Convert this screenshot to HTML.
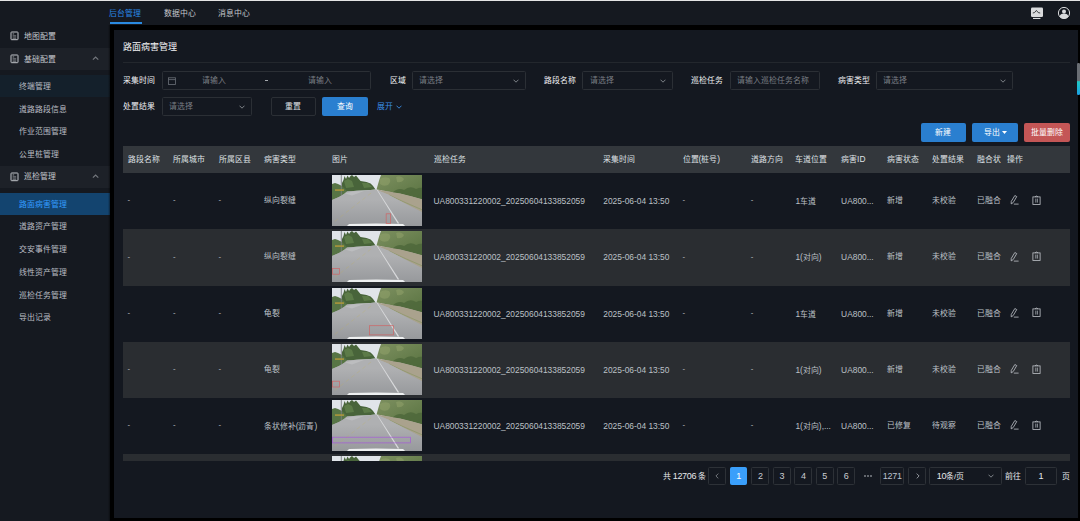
<!DOCTYPE html><html lang="zh-CN"><head><meta charset="utf-8"><style>
*{box-sizing:border-box;margin:0;padding:0}
html,body{width:1080px;height:521px;overflow:hidden;background:#000;font-family:"Liberation Sans",sans-serif;color:#cfd3da;font-size:7.875px}
.a{position:absolute;white-space:nowrap}
.tab{height:10px;line-height:10px;color:#c4c7cc}
.sm{left:18.8px;height:22.5px;line-height:22.5px;color:#b9bdc3}
.lbl{height:18px;line-height:18px;color:#f0f1f3;font-weight:500;transform:translateY(1.3px)}
.inp{height:18.5px;border:1px solid #2b2f35;border-radius:1.5px}
.ph{color:#7a7e84;transform:translateY(0.8px)}
.btn{height:18.5px;line-height:20.5px;text-align:center;color:#fff;border-radius:2px}
.th{height:27px;line-height:27px;color:#dfe1e4}
.td{line-height:10px;color:#bcc0c6}
.pg{height:17.5px;border:1px solid #2d3137;border-radius:1.5px;text-align:center;color:#c9ccd1;line-height:16.5px}
</style></head><body>
<svg width="0" height="0" style="position:absolute"><defs><linearGradient id="rg" x1="0" y1="0" x2="0" y2="1"><stop offset="0.28" stop-color="#afb0b2"/><stop offset="1" stop-color="#97999c"/></linearGradient><linearGradient id="tg" x1="0" y1="0" x2="1" y2="1"><stop offset="0" stop-color="#7d9060"/><stop offset="1" stop-color="#587240"/></linearGradient></defs></svg>
<div class="a" style="left:0;top:0;width:1080px;height:1px;background:#e4e4e4"></div>
<div class="a" style="left:0;top:1px;width:1080px;height:24px;background:#151920"></div>
<div class="a" style="left:0;top:25px;width:110px;height:496px;background:#151920"></div>
<div class="a" style="left:114px;top:29.5px;width:963.5px;height:488.5px;background:#141820"></div>
<div class="a tab" style="left:109.2px;top:8.7px;color:#2a8ae8">后台管理</div>
<div class="a" style="left:109.5px;top:22px;width:32px;height:2px;background:#2a8ae0"></div>
<div class="a tab" style="left:164px;top:8.7px">数据中心</div>
<div class="a tab" style="left:218px;top:8.7px">消息中心</div>
<svg class="a" style="left:1030px;top:6px" width="14" height="14" viewBox="0 0 14 14">
<rect x="1" y="1.5" width="12" height="9.5" rx="1.3" fill="#d9dadc"/>
<path d="M2.8 7 L4.5 6.6 L6.4 4.4 L8.2 6.6 L10.2 7" stroke="#3a3c40" stroke-width="1" fill="none"/>
<rect x="3" y="11.9" width="7.4" height="1.1" fill="#d9dadc"/></svg>
<svg class="a" style="left:1057px;top:6px" width="14" height="14" viewBox="0 0 14 14">
<circle cx="7" cy="7" r="5.6" stroke="#d9dadc" stroke-width="1" fill="none"/>
<circle cx="7" cy="5.4" r="2" fill="#d9dadc"/>
<path d="M2.6 10.8 Q3.2 7.6 7 7.6 Q10.8 7.6 11.4 10.8 Q9.6 12.8 7 12.8 Q4.4 12.8 2.6 10.8Z" fill="#d9dadc"/></svg>
<svg class="a" style="left:10.4px;top:31.1px" width="9" height="10" viewBox="0 0 9 10">
<rect x="1" y="1" width="7" height="7.7" rx="0.6" stroke="#c2c5ca" stroke-width="1" fill="none"/>
<path d="M2.6 2.95h1.6M2.6 4.95h3.6M2.6 7.1h3.6" stroke="#b5b8bd" stroke-width="0.8"/></svg>
<div class="a" style="left:24px;top:26.3px;height:22.5px;line-height:22.5px;color:#c4c7cc">地图配置</div>
<div class="a" style="left:0;top:47.5px;width:110px;height:22.2px;background:#1d2128"></div>
<svg class="a" style="left:10.4px;top:54.3px" width="9" height="10" viewBox="0 0 9 10">
<rect x="1" y="1" width="7" height="7.7" rx="0.6" stroke="#c2c5ca" stroke-width="1" fill="none"/>
<path d="M2.6 2.95h1.6M2.6 4.95h3.6M2.6 7.1h3.6" stroke="#b5b8bd" stroke-width="0.8"/></svg>
<div class="a" style="left:24px;top:49.3px;height:22.2px;line-height:22.2px;color:#c4c7cc">基础配置</div>
<svg class="a" style="left:91.5px;top:56.2px" width="7" height="4.5" viewBox="0 0 7 4.5"><path d="M0.9 3.6 L3.6 1 L6.3 3.6" stroke="#73777d" stroke-width="1.2" fill="none"/></svg>
<div class="a" style="left:0;top:74.8px;width:110px;height:22.5px;background:#14202b"></div>
<div class="a sm" style="top:75.9px">终端管理</div>
<div class="a sm" style="top:98.5px">道路路段信息</div>
<div class="a sm" style="top:121.10000000000001px">作业范围管理</div>
<div class="a sm" style="top:143.70000000000002px">公里桩管理</div>
<div class="a" style="left:0;top:165.5px;width:110px;height:22.5px;background:#1d2128"></div>
<svg class="a" style="left:10.4px;top:171.6px" width="9" height="10" viewBox="0 0 9 10">
<rect x="1" y="1" width="7" height="7.7" rx="0.6" stroke="#c2c5ca" stroke-width="1" fill="none"/>
<path d="M2.6 2.95h1.6M2.6 4.95h3.6M2.6 7.1h3.6" stroke="#b5b8bd" stroke-width="0.8"/></svg>
<div class="a" style="left:24px;top:166px;height:22.5px;line-height:22.5px;color:#c4c7cc">巡检管理</div>
<svg class="a" style="left:91.5px;top:174.4px" width="7" height="4.5" viewBox="0 0 7 4.5"><path d="M0.9 3.6 L3.6 1 L6.3 3.6" stroke="#73777d" stroke-width="1.2" fill="none"/></svg>
<div class="a" style="left:0;top:192.5px;width:109.5px;height:22.3px;background:#13446f"></div>
<div class="a sm" style="top:193.5px;color:#339dff">路面病害管理</div>
<div class="a sm" style="top:216.4px">道路资产管理</div>
<div class="a sm" style="top:239.15px">交安事件管理</div>
<div class="a sm" style="top:261.9px">线性资产管理</div>
<div class="a sm" style="top:284.65px">巡检任务管理</div>
<div class="a sm" style="top:307.4px">导出记录</div>
<div class="a" style="left:107.5px;top:25px;width:2.5px;height:496px;background:linear-gradient(90deg,rgba(0,0,0,0),rgba(0,0,0,0.45))"></div>
<div class="a" style="left:123px;top:41.5px;height:11px;line-height:11px;font-size:9px;color:#f2f3f5;font-weight:500">路面病害管理</div>
<div class="a" style="left:123px;top:62px;width:947px;height:1px;background:#23272d"></div>
<div class="a lbl" style="left:123px;top:71.1px;height:18.5px;line-height:18.5px">采集时间</div>
<div class="a inp" style="left:162.2px;top:71.1px;width:209px"></div>
<svg class="a" style="left:167.5px;top:76.6px" width="8" height="8" viewBox="0 0 8 8"><rect x="0.5" y="0.8" width="7" height="6.7" stroke="#6c7178" stroke-width="0.8" fill="none"/><path d="M0.5 2.6h7" stroke="#6c7178" stroke-width="0.8"/></svg>
<div class="a ph" style="left:202.4px;top:71.1px;height:18.5px;line-height:18.5px">请输入</div>
<div class="a" style="left:264.8px;top:80.1px;width:3.6px;height:0.9px;background:#a4a8ad"></div>
<div class="a ph" style="left:307.8px;top:71.1px;height:18.5px;line-height:18.5px">请输入</div>
<div class="a lbl" style="left:390px;top:71.1px;height:18.5px;line-height:18.5px">区域</div>
<div class="a inp" style="left:412.3px;top:71.1px;width:113.6px"></div>
<div class="a ph" style="left:418.5px;top:71.1px;height:18.5px;line-height:18.5px">请选择</div>
<svg class="a" style="left:513px;top:78.6px" width="6" height="4" viewBox="0 0 6 4"><path d="M0.5 0.7 L3 3.2 L5.5 0.7" stroke="#8a8e94" stroke-width="0.9" fill="none"/></svg>
<div class="a lbl" style="left:543.7px;top:71.1px;height:18.5px;line-height:18.5px">路段名称</div>
<div class="a inp" style="left:582.2px;top:71.1px;width:90.8px"></div>
<div class="a ph" style="left:589.6px;top:71.1px;height:18.5px;line-height:18.5px">请选择</div>
<svg class="a" style="left:659.8px;top:78.6px" width="6" height="4" viewBox="0 0 6 4"><path d="M0.5 0.7 L3 3.2 L5.5 0.7" stroke="#8a8e94" stroke-width="0.9" fill="none"/></svg>
<div class="a lbl" style="left:691px;top:71.1px;height:18.5px;line-height:18.5px">巡检任务</div>
<div class="a inp" style="left:730px;top:71.1px;width:90px"></div>
<div class="a ph" style="left:737px;top:71.1px;height:18.5px;line-height:18.5px">请输入巡检任务名称</div>
<div class="a lbl" style="left:838px;top:71.1px;height:18.5px;line-height:18.5px">病害类型</div>
<div class="a inp" style="left:876.3px;top:71.1px;width:136.6px"></div>
<div class="a ph" style="left:882.8px;top:71.1px;height:18.5px;line-height:18.5px">请选择</div>
<svg class="a" style="left:999.6px;top:78.6px" width="6" height="4" viewBox="0 0 6 4"><path d="M0.5 0.7 L3 3.2 L5.5 0.7" stroke="#8a8e94" stroke-width="0.9" fill="none"/></svg>
<div class="a lbl" style="left:123px;top:97.2px;height:18.5px;line-height:18.5px">处置结果</div>
<div class="a inp" style="left:162.2px;top:97.2px;width:89.8px"></div>
<div class="a ph" style="left:168.7px;top:97.2px;height:18.5px;line-height:18.5px">请选择</div>
<svg class="a" style="left:238.5px;top:104.7px" width="6" height="4" viewBox="0 0 6 4"><path d="M0.5 0.7 L3 3.2 L5.5 0.7" stroke="#8a8e94" stroke-width="0.9" fill="none"/></svg>
<div class="a btn" style="left:270.7px;top:97.2px;width:45px;border:1px solid #2b2f35;color:#dfe1e4;line-height:18.5px">重置</div>
<div class="a btn" style="left:322.3px;top:97.2px;width:45.7px;background:#2a7fd0">查询</div>
<div class="a" style="left:376.7px;top:98.2px;height:18.5px;line-height:18.5px;color:#3a8ee6">展开</div>
<svg class="a" style="left:396px;top:105.0px" width="6" height="4" viewBox="0 0 6 4"><path d="M0.5 0.7 L3 3.2 L5.5 0.7" stroke="#3a8ee6" stroke-width="0.9" fill="none"/></svg>
<div class="a btn" style="left:920.5px;top:123.3px;width:45px;background:#2a7fd0">新建</div>
<div class="a btn" style="left:972.2px;top:123.3px;width:45.6px;background:#2a7fd0;padding-right:6px">导出</div>
<svg class="a" style="left:1002px;top:131px" width="5" height="3" viewBox="0 0 5 3"><path d="M0 0H5L2.5 3Z" fill="#fff"/></svg>
<div class="a btn" style="left:1024.2px;top:123.3px;width:45.8px;background:#c45656">批量删除</div>
<div class="a" style="left:123px;top:146px;width:947px;height:27px;background:#33373c"></div>
<div class="a th" style="left:127.6px;top:146px">路段名称</div>
<div class="a th" style="left:173px;top:146px">所属城市</div>
<div class="a th" style="left:218.5px;top:146px">所属区县</div>
<div class="a th" style="left:263.7px;top:146px">病害类型</div>
<div class="a th" style="left:332px;top:146px">图片</div>
<div class="a th" style="left:433.5px;top:146px">巡检任务</div>
<div class="a th" style="left:603.3px;top:146px">采集时间</div>
<div class="a th" style="left:682.5px;top:146px">位置<span style="font-size:8.4px">(</span>桩号<span style="font-size:8.4px">)</span></div>
<div class="a th" style="left:750.7px;top:146px">道路方向</div>
<div class="a th" style="left:795.4px;top:146px">车道位置</div>
<div class="a th" style="left:841.1px;top:146px">病害<span style="font-size:8.4px">ID</span></div>
<div class="a th" style="left:886.5px;top:146px">病害状态</div>
<div class="a th" style="left:931.8px;top:146px">处置结果</div>
<div class="a th" style="left:977px;top:146px">融合状</div>
<div class="a th" style="left:1006.7px;top:146px">操作</div>
<div class="a" style="left:123px;top:173px;width:947px;height:288px;overflow:hidden">
<div class="a td" style="left:4.599999999999994px;top:22.3px">-</div>
<div class="a td" style="left:50px;top:22.3px">-</div>
<div class="a td" style="left:95.5px;top:22.3px">-</div>
<div class="a td" style="left:140.7px;top:23.1px">纵向裂缝</div>
<div class="a td" style="left:310.5px;top:23.1px"><span style="font-size:8.4px">UA800331220002_20250604133852059</span></div>
<div class="a td" style="left:480.29999999999995px;top:23.1px"><span style="font-size:8.4px">2025-06-04 13:50</span></div>
<div class="a td" style="left:559.5px;top:22.3px">-</div>
<div class="a td" style="left:627.7px;top:22.3px">-</div>
<div class="a td" style="left:672.4px;top:23.1px"><span style="font-size:8.4px">1</span>车道</div>
<div class="a td" style="left:718.1px;top:23.1px"><span style="font-size:8.4px">UA800...</span></div>
<div class="a td" style="left:763.5px;top:23.1px">新增</div>
<div class="a td" style="left:808.8px;top:23.1px">未校验</div>
<div class="a td" style="left:854px;top:23.1px">已融合</div>
<svg class="a" style="left:208.5px;top:2.2px" width="90.6" height="51" viewBox="0 0 90.5 51" preserveAspectRatio="none">
<rect width="90.5" height="51" fill="url(#rg)"/>
<rect width="50" height="16" fill="#e0e4e9"/>
<path d="M10 16 L10 8 L11.5 5 L12.5 1 L14 4 L15.5 0.5 L17 3 L18.5 1 L20 0 L22 2 L24 0.5 L26 3 L28.5 6 L31.5 6.5 L34.5 7 L38.5 8.5 L41 11 L43.5 14.5 L36 15.2 L25 15.8 L15 16.5Z" fill="#48643a"/>
<path d="M12 6 L16 4 L20 6 L22 12 L14 13Z" fill="#6b8a52" opacity="0.6"/>
<path d="M30 8 L36 8 L40 12 L32 13Z" fill="#6b8a52" opacity="0.6"/>
<path d="M0 9 L3 8 L6 9 L10 11 L13 14 L15 16.5 L12 19 L7 22 L0 25Z" fill="#577545"/>
<rect x="8.8" y="0" width="0.9" height="21" fill="#7a7e80"/>
<rect x="3" y="14.2" width="9" height="1.8" fill="#b59a3a" opacity="0.8"/>
<path d="M44.5 14.5 L46 9 L47.5 4 L49 0 L90.5 0 L90.5 24.5 L80 21.5 L68 18.5 L56 16.5 L48 15Z" fill="url(#tg)"/>
<path d="M60 18 Q66 12 72 15 Q78 10 84 14 Q88 12 90.5 13 L90.5 24.5 L80 21.5 L68 18.5Z" fill="#4c6639" opacity="0.8"/>
<path d="M48 4 Q52 1 57 3 Q60 6 56 10 Q51 12 48 9Z M64 2 Q69 0 72 4 Q70 8 65 7Z" fill="#93a46c" opacity="0.5"/>
<path d="M44.8 15 L48 15 L56 16.5 L68 18.5 L80 21.5 L90.5 24.5 L90.5 37.5 L72 28 L56 19.5Z" fill="#aaa28d"/>
<path d="M57 20 L72 27 L90.5 35" stroke="#75904c" stroke-width="0.7" opacity="0.6" fill="none"/>
<path d="M0 25 L7 22 L12 19 L15 16.5 L25 15.8 L36 15.2 L43.5 14.5 L44.8 15 L56 19.5 L72 28 L90.5 37.5 L90.5 51 L0 51Z" fill="url(#rg)"/>
<path d="M13 18.5 L22 16.3 L32 16 L20 20.5Z" fill="#bcbdbf"/>
<path d="M44.8 15 L45.5 15 L67.2 48.5 L65.6 48.5Z" fill="#d9dadc"/>
<path d="M39 18 L2 47" stroke="#c3b25c" stroke-width="0.6" stroke-dasharray="4 3" opacity="0.45"/>
<path d="M15 51 L17 49 Q44 48.2 71 49 L73 51Z" fill="#eef0f1"/>
<rect x="54.1" y="38.8" width="4.5" height="9.8" stroke="#d65a5a" stroke-width="0.7" fill="none" opacity="0.85"/>
</svg>
<svg class="a" style="left:887px;top:22.3px" width="10" height="10" viewBox="0 0 10 10"><path d="M4.85 0.5 L6.75 1.6 L3.15 7.6 L1.2 8.9 L1.25 6.45 Z" stroke="#c0c4ca" stroke-width="0.8" fill="none" stroke-linejoin="round"/><path d="M3.8 9.1 H8.6" stroke="#c0c4ca" stroke-width="0.8"/></svg>
<svg class="a" style="left:908.5px;top:21.8px" width="10" height="10" viewBox="0 0 10 10"><rect x="0.9" y="1.9" width="7.2" height="7.5" stroke="#c0c4ca" stroke-width="0.8" fill="none"/><path d="M3 1.9 Q4.5 0.2 6 1.9" stroke="#c0c4ca" stroke-width="0.8" fill="none"/><path d="M3.8 3.6 V7.6 M5.4 3.6 V7.6" stroke="#c0c4ca" stroke-width="0.7"/></svg>
<div class="a" style="left:0;top:56.25px;width:947px;height:56.25px;background:#2a2d31"></div>
<div class="a td" style="left:4.599999999999994px;top:78.55px">-</div>
<div class="a td" style="left:50px;top:78.55px">-</div>
<div class="a td" style="left:95.5px;top:78.55px">-</div>
<div class="a td" style="left:140.7px;top:79.35px">纵向裂缝</div>
<div class="a td" style="left:310.5px;top:79.35px"><span style="font-size:8.4px">UA800331220002_20250604133852059</span></div>
<div class="a td" style="left:480.29999999999995px;top:79.35px"><span style="font-size:8.4px">2025-06-04 13:50</span></div>
<div class="a td" style="left:559.5px;top:78.55px">-</div>
<div class="a td" style="left:627.7px;top:78.55px">-</div>
<div class="a td" style="left:672.4px;top:79.35px"><span style="font-size:8.4px">1(</span>对向<span style="font-size:8.4px">)</span></div>
<div class="a td" style="left:718.1px;top:79.35px"><span style="font-size:8.4px">UA800...</span></div>
<div class="a td" style="left:763.5px;top:79.35px">新增</div>
<div class="a td" style="left:808.8px;top:79.35px">未校验</div>
<div class="a td" style="left:854px;top:79.35px">已融合</div>
<svg class="a" style="left:208.5px;top:58.45px" width="90.6" height="51" viewBox="0 0 90.5 51" preserveAspectRatio="none">
<rect width="90.5" height="51" fill="url(#rg)"/>
<rect width="50" height="16" fill="#e0e4e9"/>
<path d="M10 16 L10 8 L11.5 5 L12.5 1 L14 4 L15.5 0.5 L17 3 L18.5 1 L20 0 L22 2 L24 0.5 L26 3 L28.5 6 L31.5 6.5 L34.5 7 L38.5 8.5 L41 11 L43.5 14.5 L36 15.2 L25 15.8 L15 16.5Z" fill="#48643a"/>
<path d="M12 6 L16 4 L20 6 L22 12 L14 13Z" fill="#6b8a52" opacity="0.6"/>
<path d="M30 8 L36 8 L40 12 L32 13Z" fill="#6b8a52" opacity="0.6"/>
<path d="M0 9 L3 8 L6 9 L10 11 L13 14 L15 16.5 L12 19 L7 22 L0 25Z" fill="#577545"/>
<rect x="8.8" y="0" width="0.9" height="21" fill="#7a7e80"/>
<rect x="3" y="14.2" width="9" height="1.8" fill="#b59a3a" opacity="0.8"/>
<path d="M44.5 14.5 L46 9 L47.5 4 L49 0 L90.5 0 L90.5 24.5 L80 21.5 L68 18.5 L56 16.5 L48 15Z" fill="url(#tg)"/>
<path d="M60 18 Q66 12 72 15 Q78 10 84 14 Q88 12 90.5 13 L90.5 24.5 L80 21.5 L68 18.5Z" fill="#4c6639" opacity="0.8"/>
<path d="M48 4 Q52 1 57 3 Q60 6 56 10 Q51 12 48 9Z M64 2 Q69 0 72 4 Q70 8 65 7Z" fill="#93a46c" opacity="0.5"/>
<path d="M44.8 15 L48 15 L56 16.5 L68 18.5 L80 21.5 L90.5 24.5 L90.5 37.5 L72 28 L56 19.5Z" fill="#aaa28d"/>
<path d="M57 20 L72 27 L90.5 35" stroke="#75904c" stroke-width="0.7" opacity="0.6" fill="none"/>
<path d="M0 25 L7 22 L12 19 L15 16.5 L25 15.8 L36 15.2 L43.5 14.5 L44.8 15 L56 19.5 L72 28 L90.5 37.5 L90.5 51 L0 51Z" fill="url(#rg)"/>
<path d="M13 18.5 L22 16.3 L32 16 L20 20.5Z" fill="#bcbdbf"/>
<path d="M44.8 15 L45.5 15 L67.2 48.5 L65.6 48.5Z" fill="#d9dadc"/>
<path d="M39 18 L2 47" stroke="#c3b25c" stroke-width="0.6" stroke-dasharray="4 3" opacity="0.45"/>
<path d="M15 51 L17 49 Q44 48.2 71 49 L73 51Z" fill="#eef0f1"/>
<rect x="0.4" y="37.4" width="7.2" height="5.8" stroke="#d65a5a" stroke-width="0.7" fill="none" opacity="0.85"/>
</svg>
<svg class="a" style="left:887px;top:78.55px" width="10" height="10" viewBox="0 0 10 10"><path d="M4.85 0.5 L6.75 1.6 L3.15 7.6 L1.2 8.9 L1.25 6.45 Z" stroke="#c0c4ca" stroke-width="0.8" fill="none" stroke-linejoin="round"/><path d="M3.8 9.1 H8.6" stroke="#c0c4ca" stroke-width="0.8"/></svg>
<svg class="a" style="left:908.5px;top:78.05px" width="10" height="10" viewBox="0 0 10 10"><rect x="0.9" y="1.9" width="7.2" height="7.5" stroke="#c0c4ca" stroke-width="0.8" fill="none"/><path d="M3 1.9 Q4.5 0.2 6 1.9" stroke="#c0c4ca" stroke-width="0.8" fill="none"/><path d="M3.8 3.6 V7.6 M5.4 3.6 V7.6" stroke="#c0c4ca" stroke-width="0.7"/></svg>
<div class="a td" style="left:4.599999999999994px;top:134.79999999999998px">-</div>
<div class="a td" style="left:50px;top:134.79999999999998px">-</div>
<div class="a td" style="left:95.5px;top:134.79999999999998px">-</div>
<div class="a td" style="left:140.7px;top:135.6px">龟裂</div>
<div class="a td" style="left:310.5px;top:135.6px"><span style="font-size:8.4px">UA800331220002_20250604133852059</span></div>
<div class="a td" style="left:480.29999999999995px;top:135.6px"><span style="font-size:8.4px">2025-06-04 13:50</span></div>
<div class="a td" style="left:559.5px;top:134.79999999999998px">-</div>
<div class="a td" style="left:627.7px;top:134.79999999999998px">-</div>
<div class="a td" style="left:672.4px;top:135.6px"><span style="font-size:8.4px">1</span>车道</div>
<div class="a td" style="left:718.1px;top:135.6px"><span style="font-size:8.4px">UA800...</span></div>
<div class="a td" style="left:763.5px;top:135.6px">新增</div>
<div class="a td" style="left:808.8px;top:135.6px">未校验</div>
<div class="a td" style="left:854px;top:135.6px">已融合</div>
<svg class="a" style="left:208.5px;top:114.7px" width="90.6" height="51" viewBox="0 0 90.5 51" preserveAspectRatio="none">
<rect width="90.5" height="51" fill="url(#rg)"/>
<rect width="50" height="16" fill="#e0e4e9"/>
<path d="M10 16 L10 8 L11.5 5 L12.5 1 L14 4 L15.5 0.5 L17 3 L18.5 1 L20 0 L22 2 L24 0.5 L26 3 L28.5 6 L31.5 6.5 L34.5 7 L38.5 8.5 L41 11 L43.5 14.5 L36 15.2 L25 15.8 L15 16.5Z" fill="#48643a"/>
<path d="M12 6 L16 4 L20 6 L22 12 L14 13Z" fill="#6b8a52" opacity="0.6"/>
<path d="M30 8 L36 8 L40 12 L32 13Z" fill="#6b8a52" opacity="0.6"/>
<path d="M0 9 L3 8 L6 9 L10 11 L13 14 L15 16.5 L12 19 L7 22 L0 25Z" fill="#577545"/>
<rect x="8.8" y="0" width="0.9" height="21" fill="#7a7e80"/>
<rect x="3" y="14.2" width="9" height="1.8" fill="#b59a3a" opacity="0.8"/>
<path d="M44.5 14.5 L46 9 L47.5 4 L49 0 L90.5 0 L90.5 24.5 L80 21.5 L68 18.5 L56 16.5 L48 15Z" fill="url(#tg)"/>
<path d="M60 18 Q66 12 72 15 Q78 10 84 14 Q88 12 90.5 13 L90.5 24.5 L80 21.5 L68 18.5Z" fill="#4c6639" opacity="0.8"/>
<path d="M48 4 Q52 1 57 3 Q60 6 56 10 Q51 12 48 9Z M64 2 Q69 0 72 4 Q70 8 65 7Z" fill="#93a46c" opacity="0.5"/>
<path d="M44.8 15 L48 15 L56 16.5 L68 18.5 L80 21.5 L90.5 24.5 L90.5 37.5 L72 28 L56 19.5Z" fill="#aaa28d"/>
<path d="M57 20 L72 27 L90.5 35" stroke="#75904c" stroke-width="0.7" opacity="0.6" fill="none"/>
<path d="M0 25 L7 22 L12 19 L15 16.5 L25 15.8 L36 15.2 L43.5 14.5 L44.8 15 L56 19.5 L72 28 L90.5 37.5 L90.5 51 L0 51Z" fill="url(#rg)"/>
<path d="M13 18.5 L22 16.3 L32 16 L20 20.5Z" fill="#bcbdbf"/>
<path d="M44.8 15 L45.5 15 L67.2 48.5 L65.6 48.5Z" fill="#d9dadc"/>
<path d="M39 18 L2 47" stroke="#c3b25c" stroke-width="0.6" stroke-dasharray="4 3" opacity="0.45"/>
<path d="M15 51 L17 49 Q44 48.2 71 49 L73 51Z" fill="#eef0f1"/>
<rect x="37.6" y="37.7" width="23.8" height="9.2" stroke="#d65a5a" stroke-width="0.7" fill="none" opacity="0.85"/>
</svg>
<svg class="a" style="left:887px;top:134.8px" width="10" height="10" viewBox="0 0 10 10"><path d="M4.85 0.5 L6.75 1.6 L3.15 7.6 L1.2 8.9 L1.25 6.45 Z" stroke="#c0c4ca" stroke-width="0.8" fill="none" stroke-linejoin="round"/><path d="M3.8 9.1 H8.6" stroke="#c0c4ca" stroke-width="0.8"/></svg>
<svg class="a" style="left:908.5px;top:134.3px" width="10" height="10" viewBox="0 0 10 10"><rect x="0.9" y="1.9" width="7.2" height="7.5" stroke="#c0c4ca" stroke-width="0.8" fill="none"/><path d="M3 1.9 Q4.5 0.2 6 1.9" stroke="#c0c4ca" stroke-width="0.8" fill="none"/><path d="M3.8 3.6 V7.6 M5.4 3.6 V7.6" stroke="#c0c4ca" stroke-width="0.7"/></svg>
<div class="a" style="left:0;top:168.75px;width:947px;height:56.25px;background:#2a2d31"></div>
<div class="a td" style="left:4.599999999999994px;top:191.04999999999998px">-</div>
<div class="a td" style="left:50px;top:191.04999999999998px">-</div>
<div class="a td" style="left:95.5px;top:191.04999999999998px">-</div>
<div class="a td" style="left:140.7px;top:191.85px">龟裂</div>
<div class="a td" style="left:310.5px;top:191.85px"><span style="font-size:8.4px">UA800331220002_20250604133852059</span></div>
<div class="a td" style="left:480.29999999999995px;top:191.85px"><span style="font-size:8.4px">2025-06-04 13:50</span></div>
<div class="a td" style="left:559.5px;top:191.04999999999998px">-</div>
<div class="a td" style="left:627.7px;top:191.04999999999998px">-</div>
<div class="a td" style="left:672.4px;top:191.85px"><span style="font-size:8.4px">1(</span>对向<span style="font-size:8.4px">)</span></div>
<div class="a td" style="left:718.1px;top:191.85px"><span style="font-size:8.4px">UA800...</span></div>
<div class="a td" style="left:763.5px;top:191.85px">新增</div>
<div class="a td" style="left:808.8px;top:191.85px">未校验</div>
<div class="a td" style="left:854px;top:191.85px">已融合</div>
<svg class="a" style="left:208.5px;top:170.95px" width="90.6" height="51" viewBox="0 0 90.5 51" preserveAspectRatio="none">
<rect width="90.5" height="51" fill="url(#rg)"/>
<rect width="50" height="16" fill="#e0e4e9"/>
<path d="M10 16 L10 8 L11.5 5 L12.5 1 L14 4 L15.5 0.5 L17 3 L18.5 1 L20 0 L22 2 L24 0.5 L26 3 L28.5 6 L31.5 6.5 L34.5 7 L38.5 8.5 L41 11 L43.5 14.5 L36 15.2 L25 15.8 L15 16.5Z" fill="#48643a"/>
<path d="M12 6 L16 4 L20 6 L22 12 L14 13Z" fill="#6b8a52" opacity="0.6"/>
<path d="M30 8 L36 8 L40 12 L32 13Z" fill="#6b8a52" opacity="0.6"/>
<path d="M0 9 L3 8 L6 9 L10 11 L13 14 L15 16.5 L12 19 L7 22 L0 25Z" fill="#577545"/>
<rect x="8.8" y="0" width="0.9" height="21" fill="#7a7e80"/>
<rect x="3" y="14.2" width="9" height="1.8" fill="#b59a3a" opacity="0.8"/>
<path d="M44.5 14.5 L46 9 L47.5 4 L49 0 L90.5 0 L90.5 24.5 L80 21.5 L68 18.5 L56 16.5 L48 15Z" fill="url(#tg)"/>
<path d="M60 18 Q66 12 72 15 Q78 10 84 14 Q88 12 90.5 13 L90.5 24.5 L80 21.5 L68 18.5Z" fill="#4c6639" opacity="0.8"/>
<path d="M48 4 Q52 1 57 3 Q60 6 56 10 Q51 12 48 9Z M64 2 Q69 0 72 4 Q70 8 65 7Z" fill="#93a46c" opacity="0.5"/>
<path d="M44.8 15 L48 15 L56 16.5 L68 18.5 L80 21.5 L90.5 24.5 L90.5 37.5 L72 28 L56 19.5Z" fill="#aaa28d"/>
<path d="M57 20 L72 27 L90.5 35" stroke="#75904c" stroke-width="0.7" opacity="0.6" fill="none"/>
<path d="M0 25 L7 22 L12 19 L15 16.5 L25 15.8 L36 15.2 L43.5 14.5 L44.8 15 L56 19.5 L72 28 L90.5 37.5 L90.5 51 L0 51Z" fill="url(#rg)"/>
<path d="M13 18.5 L22 16.3 L32 16 L20 20.5Z" fill="#bcbdbf"/>
<path d="M44.8 15 L45.5 15 L67.2 48.5 L65.6 48.5Z" fill="#d9dadc"/>
<path d="M39 18 L2 47" stroke="#c3b25c" stroke-width="0.6" stroke-dasharray="4 3" opacity="0.45"/>
<path d="M15 51 L17 49 Q44 48.2 71 49 L73 51Z" fill="#eef0f1"/>
<rect x="0.4" y="37.2" width="7.2" height="5.8" stroke="#d65a5a" stroke-width="0.7" fill="none" opacity="0.85"/>
</svg>
<svg class="a" style="left:887px;top:191.05px" width="10" height="10" viewBox="0 0 10 10"><path d="M4.85 0.5 L6.75 1.6 L3.15 7.6 L1.2 8.9 L1.25 6.45 Z" stroke="#c0c4ca" stroke-width="0.8" fill="none" stroke-linejoin="round"/><path d="M3.8 9.1 H8.6" stroke="#c0c4ca" stroke-width="0.8"/></svg>
<svg class="a" style="left:908.5px;top:190.55px" width="10" height="10" viewBox="0 0 10 10"><rect x="0.9" y="1.9" width="7.2" height="7.5" stroke="#c0c4ca" stroke-width="0.8" fill="none"/><path d="M3 1.9 Q4.5 0.2 6 1.9" stroke="#c0c4ca" stroke-width="0.8" fill="none"/><path d="M3.8 3.6 V7.6 M5.4 3.6 V7.6" stroke="#c0c4ca" stroke-width="0.7"/></svg>
<div class="a td" style="left:4.599999999999994px;top:247.29999999999998px">-</div>
<div class="a td" style="left:50px;top:247.29999999999998px">-</div>
<div class="a td" style="left:95.5px;top:247.29999999999998px">-</div>
<div class="a td" style="left:140.7px;top:248.1px">条状修补<span style="font-size:8.4px">(</span>沥青<span style="font-size:8.4px">)</span></div>
<div class="a td" style="left:310.5px;top:248.1px"><span style="font-size:8.4px">UA800331220002_20250604133852059</span></div>
<div class="a td" style="left:480.29999999999995px;top:248.1px"><span style="font-size:8.4px">2025-06-04 13:50</span></div>
<div class="a td" style="left:559.5px;top:247.29999999999998px">-</div>
<div class="a td" style="left:627.7px;top:247.29999999999998px">-</div>
<div class="a td" style="left:672.4px;top:248.1px"><span style="font-size:8.4px">1(</span>对向<span style="font-size:8.4px">),...</span></div>
<div class="a td" style="left:718.1px;top:248.1px"><span style="font-size:8.4px">UA800...</span></div>
<div class="a td" style="left:763.5px;top:248.1px">已修复</div>
<div class="a td" style="left:808.8px;top:248.1px">待观察</div>
<div class="a td" style="left:854px;top:248.1px">已融合</div>
<svg class="a" style="left:208.5px;top:227.2px" width="90.6" height="51" viewBox="0 0 90.5 51" preserveAspectRatio="none">
<rect width="90.5" height="51" fill="url(#rg)"/>
<rect width="50" height="16" fill="#e0e4e9"/>
<path d="M10 16 L10 8 L11.5 5 L12.5 1 L14 4 L15.5 0.5 L17 3 L18.5 1 L20 0 L22 2 L24 0.5 L26 3 L28.5 6 L31.5 6.5 L34.5 7 L38.5 8.5 L41 11 L43.5 14.5 L36 15.2 L25 15.8 L15 16.5Z" fill="#48643a"/>
<path d="M12 6 L16 4 L20 6 L22 12 L14 13Z" fill="#6b8a52" opacity="0.6"/>
<path d="M30 8 L36 8 L40 12 L32 13Z" fill="#6b8a52" opacity="0.6"/>
<path d="M0 9 L3 8 L6 9 L10 11 L13 14 L15 16.5 L12 19 L7 22 L0 25Z" fill="#577545"/>
<rect x="8.8" y="0" width="0.9" height="21" fill="#7a7e80"/>
<rect x="3" y="14.2" width="9" height="1.8" fill="#b59a3a" opacity="0.8"/>
<path d="M44.5 14.5 L46 9 L47.5 4 L49 0 L90.5 0 L90.5 24.5 L80 21.5 L68 18.5 L56 16.5 L48 15Z" fill="url(#tg)"/>
<path d="M60 18 Q66 12 72 15 Q78 10 84 14 Q88 12 90.5 13 L90.5 24.5 L80 21.5 L68 18.5Z" fill="#4c6639" opacity="0.8"/>
<path d="M48 4 Q52 1 57 3 Q60 6 56 10 Q51 12 48 9Z M64 2 Q69 0 72 4 Q70 8 65 7Z" fill="#93a46c" opacity="0.5"/>
<path d="M44.8 15 L48 15 L56 16.5 L68 18.5 L80 21.5 L90.5 24.5 L90.5 37.5 L72 28 L56 19.5Z" fill="#aaa28d"/>
<path d="M57 20 L72 27 L90.5 35" stroke="#75904c" stroke-width="0.7" opacity="0.6" fill="none"/>
<path d="M0 25 L7 22 L12 19 L15 16.5 L25 15.8 L36 15.2 L43.5 14.5 L44.8 15 L56 19.5 L72 28 L90.5 37.5 L90.5 51 L0 51Z" fill="url(#rg)"/>
<path d="M13 18.5 L22 16.3 L32 16 L20 20.5Z" fill="#bcbdbf"/>
<path d="M44.8 15 L45.5 15 L67.2 48.5 L65.6 48.5Z" fill="#d9dadc"/>
<path d="M39 18 L2 47" stroke="#c3b25c" stroke-width="0.6" stroke-dasharray="4 3" opacity="0.45"/>
<path d="M15 51 L17 49 Q44 48.2 71 49 L73 51Z" fill="#eef0f1"/>
<rect x="0.4" y="37.2" width="78" height="5.7" stroke="#a64ee0" stroke-width="0.7" fill="none" opacity="0.85"/>
</svg>
<svg class="a" style="left:887px;top:247.3px" width="10" height="10" viewBox="0 0 10 10"><path d="M4.85 0.5 L6.75 1.6 L3.15 7.6 L1.2 8.9 L1.25 6.45 Z" stroke="#c0c4ca" stroke-width="0.8" fill="none" stroke-linejoin="round"/><path d="M3.8 9.1 H8.6" stroke="#c0c4ca" stroke-width="0.8"/></svg>
<svg class="a" style="left:908.5px;top:246.8px" width="10" height="10" viewBox="0 0 10 10"><rect x="0.9" y="1.9" width="7.2" height="7.5" stroke="#c0c4ca" stroke-width="0.8" fill="none"/><path d="M3 1.9 Q4.5 0.2 6 1.9" stroke="#c0c4ca" stroke-width="0.8" fill="none"/><path d="M3.8 3.6 V7.6 M5.4 3.6 V7.6" stroke="#c0c4ca" stroke-width="0.7"/></svg>
<div class="a" style="left:0;top:281.25px;width:947px;height:56.25px;background:#2a2d31"></div>
<div class="a td" style="left:4.599999999999994px;top:303.55px">-</div>
<div class="a td" style="left:50px;top:303.55px">-</div>
<div class="a td" style="left:95.5px;top:303.55px">-</div>
<div class="a td" style="left:140.7px;top:304.35px">纵向裂缝</div>
<div class="a td" style="left:310.5px;top:304.35px"><span style="font-size:8.4px">UA800331220002_20250604133852059</span></div>
<div class="a td" style="left:480.29999999999995px;top:304.35px"><span style="font-size:8.4px">2025-06-04 13:50</span></div>
<div class="a td" style="left:559.5px;top:303.55px">-</div>
<div class="a td" style="left:627.7px;top:303.55px">-</div>
<div class="a td" style="left:672.4px;top:304.35px"><span style="font-size:8.4px">1</span>车道</div>
<div class="a td" style="left:718.1px;top:304.35px"><span style="font-size:8.4px">UA800...</span></div>
<div class="a td" style="left:763.5px;top:304.35px">新增</div>
<div class="a td" style="left:808.8px;top:304.35px">未校验</div>
<div class="a td" style="left:854px;top:304.35px">已融合</div>
<svg class="a" style="left:208.5px;top:283.45px" width="90.6" height="51" viewBox="0 0 90.5 51" preserveAspectRatio="none">
<rect width="90.5" height="51" fill="url(#rg)"/>
<rect width="50" height="16" fill="#e0e4e9"/>
<path d="M10 16 L10 8 L11.5 5 L12.5 1 L14 4 L15.5 0.5 L17 3 L18.5 1 L20 0 L22 2 L24 0.5 L26 3 L28.5 6 L31.5 6.5 L34.5 7 L38.5 8.5 L41 11 L43.5 14.5 L36 15.2 L25 15.8 L15 16.5Z" fill="#48643a"/>
<path d="M12 6 L16 4 L20 6 L22 12 L14 13Z" fill="#6b8a52" opacity="0.6"/>
<path d="M30 8 L36 8 L40 12 L32 13Z" fill="#6b8a52" opacity="0.6"/>
<path d="M0 9 L3 8 L6 9 L10 11 L13 14 L15 16.5 L12 19 L7 22 L0 25Z" fill="#577545"/>
<rect x="8.8" y="0" width="0.9" height="21" fill="#7a7e80"/>
<rect x="3" y="14.2" width="9" height="1.8" fill="#b59a3a" opacity="0.8"/>
<path d="M44.5 14.5 L46 9 L47.5 4 L49 0 L90.5 0 L90.5 24.5 L80 21.5 L68 18.5 L56 16.5 L48 15Z" fill="url(#tg)"/>
<path d="M60 18 Q66 12 72 15 Q78 10 84 14 Q88 12 90.5 13 L90.5 24.5 L80 21.5 L68 18.5Z" fill="#4c6639" opacity="0.8"/>
<path d="M48 4 Q52 1 57 3 Q60 6 56 10 Q51 12 48 9Z M64 2 Q69 0 72 4 Q70 8 65 7Z" fill="#93a46c" opacity="0.5"/>
<path d="M44.8 15 L48 15 L56 16.5 L68 18.5 L80 21.5 L90.5 24.5 L90.5 37.5 L72 28 L56 19.5Z" fill="#aaa28d"/>
<path d="M57 20 L72 27 L90.5 35" stroke="#75904c" stroke-width="0.7" opacity="0.6" fill="none"/>
<path d="M0 25 L7 22 L12 19 L15 16.5 L25 15.8 L36 15.2 L43.5 14.5 L44.8 15 L56 19.5 L72 28 L90.5 37.5 L90.5 51 L0 51Z" fill="url(#rg)"/>
<path d="M13 18.5 L22 16.3 L32 16 L20 20.5Z" fill="#bcbdbf"/>
<path d="M44.8 15 L45.5 15 L67.2 48.5 L65.6 48.5Z" fill="#d9dadc"/>
<path d="M39 18 L2 47" stroke="#c3b25c" stroke-width="0.6" stroke-dasharray="4 3" opacity="0.45"/>
<path d="M15 51 L17 49 Q44 48.2 71 49 L73 51Z" fill="#eef0f1"/>
<rect x="54.1" y="38.8" width="4.5" height="9.8" stroke="#d65a5a" stroke-width="0.7" fill="none" opacity="0.85"/>
</svg>
<svg class="a" style="left:887px;top:303.55px" width="10" height="10" viewBox="0 0 10 10"><path d="M4.85 0.5 L6.75 1.6 L3.15 7.6 L1.2 8.9 L1.25 6.45 Z" stroke="#c0c4ca" stroke-width="0.8" fill="none" stroke-linejoin="round"/><path d="M3.8 9.1 H8.6" stroke="#c0c4ca" stroke-width="0.8"/></svg>
<svg class="a" style="left:908.5px;top:303.05px" width="10" height="10" viewBox="0 0 10 10"><rect x="0.9" y="1.9" width="7.2" height="7.5" stroke="#c0c4ca" stroke-width="0.8" fill="none"/><path d="M3 1.9 Q4.5 0.2 6 1.9" stroke="#c0c4ca" stroke-width="0.8" fill="none"/><path d="M3.8 3.6 V7.6 M5.4 3.6 V7.6" stroke="#c0c4ca" stroke-width="0.7"/></svg>
</div>
<div class="a" style="left:662.5px;top:467.8px;height:17.5px;line-height:17.5px;color:#e6e8eb">共 <span style="font-size:9px;letter-spacing:-0.3px">12706</span> 条</div>
<div class="a pg" style="left:708px;top:467.2px;width:18.4px"></div>
<svg class="a" style="left:715px;top:473.09999999999997px" width="4" height="6" viewBox="0 0 4 6"><path d="M3.3 0.6 L0.9 3 L3.3 5.4" stroke="#7d8187" stroke-width="0.9" fill="none"/></svg>
<div class="a pg" style="left:729.9px;top:467.2px;width:17.5px;background:#3a9ffb;border-color:#3a9ffb;color:#fff;font-size:9px;letter-spacing:-0.3px">1</div>
<div class="a pg" style="left:751.2px;top:467.2px;width:18.2px;font-size:9px;letter-spacing:-0.3px">2</div>
<div class="a pg" style="left:772.8px;top:467.2px;width:18.2px;font-size:9px;letter-spacing:-0.3px">3</div>
<div class="a pg" style="left:794.2px;top:467.2px;width:18.2px;font-size:9px;letter-spacing:-0.3px">4</div>
<div class="a pg" style="left:815.6px;top:467.2px;width:18.2px;font-size:9px;letter-spacing:-0.3px">5</div>
<div class="a pg" style="left:837px;top:467.2px;width:18.2px;font-size:9px;letter-spacing:-0.3px">6</div>
<svg class="a" style="left:863.5px;top:474.8px" width="8" height="2" viewBox="0 0 8 2"><circle cx="1" cy="1" r="0.8" fill="#c9ccd1"/><circle cx="4" cy="1" r="0.8" fill="#c9ccd1"/><circle cx="7" cy="1" r="0.8" fill="#c9ccd1"/></svg>
<div class="a pg" style="left:880.2px;top:467.2px;width:24.1px;font-size:9px;letter-spacing:-0.3px;color:#b9c3cf">1271</div>
<div class="a pg" style="left:908.1px;top:467.2px;width:17.9px"></div>
<svg class="a" style="left:915.5px;top:473.09999999999997px" width="4" height="6" viewBox="0 0 4 6"><path d="M0.7 0.6 L3.1 3 L0.7 5.4" stroke="#a0a4aa" stroke-width="0.9" fill="none"/></svg>
<div class="a pg" style="left:929.2px;top:467.2px;width:72.4px;text-align:left;padding-left:6.5px;color:#e6e8eb"><span style="font-size:9px;letter-spacing:-0.3px">10</span>条/页</div>
<svg class="a" style="left:988px;top:474.2px" width="6" height="4" viewBox="0 0 6 4"><path d="M0.5 0.7 L3 3.2 L5.5 0.7" stroke="#8a8e94" stroke-width="0.9" fill="none"/></svg>
<div class="a" style="left:1005px;top:467.8px;height:17.5px;line-height:17.5px;color:#e6e8eb">前往</div>
<div class="a pg" style="left:1025.3px;top:467.2px;width:31.3px;color:#e6e8eb;font-size:9px;letter-spacing:-0.3px">1</div>
<div class="a" style="left:1061.5px;top:467.8px;height:17.5px;line-height:17.5px;color:#e6e8eb">页</div>
<div class="a" style="left:1077.4px;top:62.7px;width:2.6px;height:32.3px;border-radius:1.3px;background:linear-gradient(#6a6e74 0,#6a6e74 57%,#1fc9c4 58%,#1a9fe6 100%)"></div>
</body></html>
